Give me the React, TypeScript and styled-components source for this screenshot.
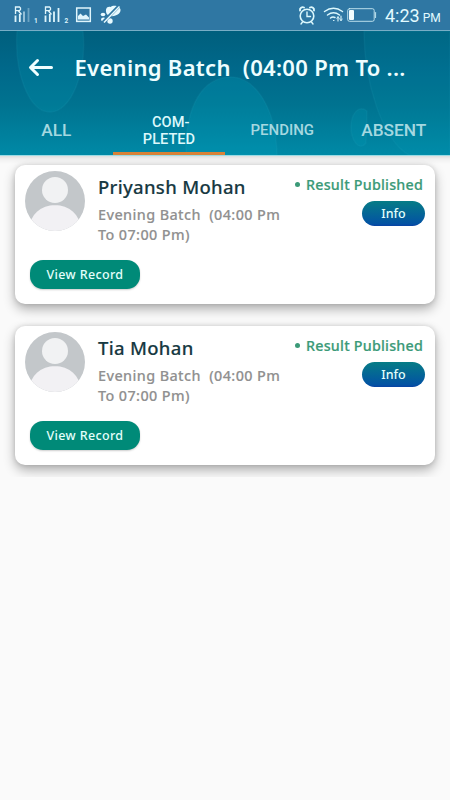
import React from "react";
import styled, { createGlobalStyle } from "styled-components";

const GlobalStyle = createGlobalStyle`
  * { box-sizing: border-box; }
  body { margin: 0; background: #fafafa; }
`;

const Screen = styled.div`
  width: 450px;
  height: 800px;
  overflow: hidden;
  background: #fafafa;
  font-family: "Noto Sans", "Open Sans", sans-serif;
`;

const StatusBar = styled.div`
  height: 31px;
  display: flex;
  justify-content: space-between;
  background: #2f77a3;
  border-bottom: 1px solid #78aec6;
  svg { display: block; }
`;

const Status = styled.div`
  display: flex;
  align-items: flex-start;
`;

const Clock = styled.div`
  width: 66px;
  padding-left: 1px;
  font: 400 18px/31px Roboto, sans-serif;
  color: #e2fbff;
  white-space: nowrap;
  small { font-size: 12px; margin-left: 3px; }
`;

const Header = styled.header`
  position: relative;
  height: 124px;
  background: linear-gradient(#005f7d 0%, #00688a 30%, #007390 60%, #0089a6 100%);
`;

const Backdrop = styled.svg`
  position: absolute;
  inset: 0;
`;

const TitleRow = styled.div`
  position: relative;
  height: 74px;
  display: flex;
  align-items: center;
  padding-left: 28px;
`;

const Title = styled.h1`
  margin: -3px 0 0 20.5px;
  font-size: 22px;
  font-weight: 600;
  letter-spacing: 0.3px;
  color: #eefeff;
  white-space: pre;
`;

const Tabs = styled.nav`
  position: relative;
  height: 50px;
  display: grid;
  grid-template-columns: repeat(4, 112.5px);
`;

const Tab = styled.div<{ $active?: boolean; $size: number; $shift?: number }>`
  display: flex;
  align-items: center;
  justify-content: center;
  text-align: center;
  white-space: pre;
  padding: ${(p) => (p.$active ? "5px 0 0" : "4px 0 0")};
  padding-left: ${(p) => p.$shift ?? 0}px;
  border-bottom: 3px solid ${(p) => (p.$active ? "#d78238" : "transparent")};
  font: 500 ${(p) => p.$size}px/17px Roboto, sans-serif;
  color: ${(p) => (p.$active ? "#dcf8fb" : "#a5d8e0")};
`;

const List = styled.main`
  height: 322px;
  padding: 10px 15px 0;
  overflow: hidden;
  display: flex;
  flex-direction: column;
  gap: 22px;
  background: linear-gradient(#9adbe5 0 1px, #dedede 1px, #f0f0f0 4px, #fafafa 9px);
`;

const Card = styled.article`
  flex: none;
  height: 139px;
  padding: 6px 10px 0;
  border-radius: 10px;
  background: #fff;
  box-shadow: 0 5px 12px rgba(0, 0, 0, 0.31), 0 0 5px rgba(0, 0, 0, 0.12);
`;

const CardTop = styled.div`
  height: 89px;
  display: flex;
  > svg { flex: none; }
`;

const Details = styled.div`
  width: 190px;
  margin-left: 13px;
`;

const Name = styled.h2`
  margin: 3px 0 5px;
  font-size: 18.5px;
  line-height: 26px;
  font-weight: 500;
  letter-spacing: 0.3px;
  color: #173942;
  -webkit-text-stroke: 0.15px #173942;
  white-space: nowrap;
`;

const Batch = styled.p`
  margin: 0;
  font-size: 14.4px;
  line-height: 20px;
  font-weight: 500;
  letter-spacing: 0.4px;
  color: #909090;
  -webkit-text-stroke: 0.15px #909090;
  white-space: pre;
`;

const Result = styled.div`
  flex: 1;
  display: flex;
  flex-direction: column;
  align-items: flex-end;
`;

const Published = styled.div`
  display: flex;
  align-items: center;
  gap: 6px;
  height: 28px;
  margin: -1px 2px 0 0;
  font-size: 14.3px;
  font-weight: 500;
  letter-spacing: 0.22px;
  color: #3b9a78;
  -webkit-text-stroke: 0.2px #3b9a78;
  white-space: nowrap;
  &::before {
    content: "";
    width: 5px;
    height: 5px;
    border-radius: 50%;
    background: currentColor;
  }
`;

const Button = styled.button`
  display: flex;
  align-items: center;
  justify-content: center;
  padding: 0 0 1px;
  border: 0;
  font-family: inherit;
  font-size: 12.5px;
  font-weight: 500;
  letter-spacing: 0.35px;
  color: #e4fffb;
`;

const InfoButton = styled(Button)`
  width: 63px;
  height: 25px;
  margin-top: 3px;
  border-radius: 13px;
  background: linear-gradient(#067c86, #0353a3 90%, #0843a4);
  letter-spacing: 0;
`;

const RecordButton = styled(Button)`
  width: 110px;
  height: 29px;
  margin-left: 5px;
  border-radius: 13px;
  background: #008a78;
  box-shadow: 0 1px 2px #0003;
`;

function LeftStatusIcons() {
  return (
    <svg width="135" height="30" viewBox="0 0 135 30" fill="none" stroke="#dff5fc">
      {[14, 44].map((x, i) => (
        <g key={x} transform={`translate(${x} 0)`}>
          <path d="M1.500 14V7H5.500L6.500 8V9.500L5.500 10.700H1.500M4.500 11L7.500 14.500" strokeWidth="1.3" />
          <path d="M1.500 15.500V22M5.800 14V22" strokeWidth="1.8" />
          <path d="M10 11.500V22" strokeWidth="1.800" opacity={i ? 1 : 0.65} />
          <path d="M14.500 8V22" strokeWidth="1.800" opacity={i ? 1 : 0.35} />
        </g>
      ))}
      <g fill="#dff5fc" stroke="none" fontFamily="Roboto, sans-serif" fontSize="6.5" fontWeight="700">
        <text x="34" y="23">1</text>
        <text x="64.500" y="23">2</text>
      </g>
      <rect x="76.700" y="8" width="13.600" height="13.400" strokeWidth="1.500" />
      <path d="M78 19.500V16L80.500 13.500L83 16L86 14.500L89 17.500V19.500Z" fill="#dff5fc" stroke="none" />
      <g fill="#e8faff" stroke="none">
        <path d="M106.500 13.500C105 9 107 6 110.500 7C113 4.500 120 5.500 120.500 9.500C121 13.500 116.500 16.500 109 16.500Z" />
        <ellipse cx="103" cy="14.500" rx="2.300" ry="1.800" />
        <ellipse cx="103.500" cy="19.500" rx="2.500" ry="2" />
        <ellipse cx="110" cy="21" rx="2.700" ry="2.800" />
      </g>
      <path d="M103 22.500L119 6" stroke="#2f77a3" strokeWidth="3.300" />
      <path d="M104 22.500L119.500 6.500" stroke="#e8faff" strokeWidth="1.500" />
    </svg>
  );
}

function RightStatusIcons() {
  return (
    <svg width="86" height="30" viewBox="298 0 86 30" fill="none" stroke="#dcf8fd" strokeLinecap="round">
      <circle cx="307" cy="16" r="6.800" strokeWidth="1.600" />
      <path d="M307 12V16.500H310.500M302.500 22L301 24M311.500 22L313 24" strokeWidth="1.400" />
      <path d="M300 10.500C299.500 8 302 6.500 304 7.500M314 10.500C314.500 8 312 6.500 310 7.500" strokeWidth="1.900" />
      <path d="M324.500 11.500Q333.500 5 342.500 11.500M327.500 15Q333.500 10.500 339.500 15M330.500 18Q332.500 16.500 335 17.500" strokeWidth="1.500" />
      <path d="M333.500 20.500H334M338 17V21M341 16V20" strokeWidth="1.100" />
      <path d="M336.800 18.500L338 16.500L339.200 18.500M339.800 19L341 21L342.200 19" strokeWidth=".8" />
      <rect x="347.700" y="8.700" width="26.500" height="12.600" rx="1.800" strokeWidth="1" opacity=".8" />
      <path d="M375.500 12.500V17.500" strokeWidth="1.200" opacity=".75" />
      <rect x="349" y="10" width="5" height="10" rx="1" fill="#f2fdff" stroke="none" />
    </svg>
  );
}

function HeaderBackdrop() {
  return (
    <Backdrop width="450" height="124" viewBox="0 0 450 124">
      <g fill="#00a5c0" fillOpacity=".16" stroke="#35b8cf" strokeOpacity=".09" strokeWidth="1.500">
        <path d="M17 0C14 42 29 81 50 81S87 42 83 0Z" />
        <path d="M186 124C185 74 203 46 231 46C254 46 276 75 277 124Z" fillOpacity=".24" />
        <path d="M364 0C364 50 382 109 409 124H450V0Z" fillOpacity=".12" />
        <path d="M367 80C358 73 351 84 351 96C351 109 359 121 366 112Z" />
      </g>
    </Backdrop>
  );
}

function BackArrow() {
  return (
    <svg width="26" height="20" viewBox="0 0 26 20" fill="none" stroke="#f0feff" strokeWidth="3" strokeLinecap="round" strokeLinejoin="round">
      <path d="M9.500 2.500L2.500 9.500L9.500 16.500M3 9.500H23.500" />
    </svg>
  );
}

function Avatar() {
  return (
    <svg width="60" height="60" viewBox="0 0 60 60">
      <clipPath id="avatar-circle"><circle cx="30" cy="30" r="30" /></clipPath>
      <g clipPath="url(#avatar-circle)">
        <rect width="60" height="60" fill="#c3c7ca" />
        <ellipse cx="30" cy="57" rx="25.500" ry="23" fill="#f2f1f4" />
        <circle cx="30" cy="19.500" r="14.700" fill="#c3c7ca" />
        <circle cx="30" cy="19" r="13" fill="#f1f2f3" />
      </g>
    </svg>
  );
}

const students = ["Priyansh Mohan", "Tia Mohan"];

export default function App() {
  return (
    <Screen>
      <GlobalStyle />
      <StatusBar>
        <LeftStatusIcons />
        <Status>
          <RightStatusIcons />
          <Clock>4:23<small>PM</small></Clock>
        </Status>
      </StatusBar>
      <Header>
        <HeaderBackdrop />
        <TitleRow>
          <BackArrow />
          <Title>{"Evening Batch  (04:00 Pm To ..."}</Title>
        </TitleRow>
        <Tabs>
          <Tab $size={17.3}>ALL</Tab>
          <Tab $size={14.6} $active $shift={4}>{"COM-\nPLETED\u00a0"}</Tab>
          <Tab $size={15} $shift={2}>PENDING</Tab>
          <Tab $size={17.3}>ABSENT</Tab>
        </Tabs>
      </Header>
      <List>
        {students.map((name) => (
          <Card key={name}>
            <CardTop>
              <Avatar />
              <Details>
                <Name>{name}</Name>
                <Batch>{"Evening Batch  (04:00 Pm\nTo 07:00 Pm)"}</Batch>
              </Details>
              <Result>
                <Published>Result Published</Published>
                <InfoButton>Info</InfoButton>
              </Result>
            </CardTop>
            <RecordButton>View Record</RecordButton>
          </Card>
        ))}
      </List>
    </Screen>
  );
}
